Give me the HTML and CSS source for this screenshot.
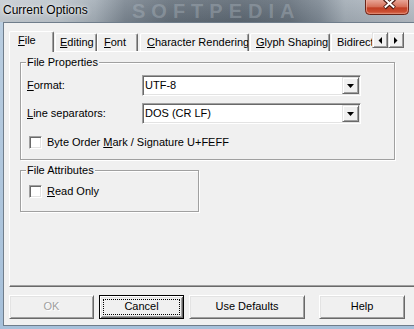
FILE: index.html
```html
<!DOCTYPE html>
<html>
<head>
<meta charset="utf-8">
<link rel="stylesheet" href="styles.css">
</head>
<body>
<div class="window">
  <div class="titlebar">
    <span class="title">Current Options</span>
    <span class="wm">SOFTPEDIA</span>
    <svg class="close" width="44" height="15" viewBox="0 0 44 15">
      <defs>
        <linearGradient id="cg" x1="0" y1="0" x2="0" y2="1">
          <stop offset="0" stop-color="#e8a596"/>
          <stop offset="0.45" stop-color="#d6715a"/>
          <stop offset="0.55" stop-color="#c13f24"/>
          <stop offset="1" stop-color="#d25a3c"/>
        </linearGradient>
      </defs>
      <path d="M0.5 0 V10.5 a4 4 0 0 0 4 4 H39.5 a4 4 0 0 0 4 -4 V0" fill="url(#cg)" stroke="#6a2518"/>
      <path d="M1.5 0 V10.3 a3 3 0 0 0 3 3 H39.5 a3 3 0 0 0 3 -3 V0" fill="none" stroke="#f0b7a8" stroke-opacity="0.6"/>
      <path d="M19.5 -1 L29.5 8 M29.5 -1 L19.5 8" stroke="#4a1a12" stroke-width="4"/>
      <path d="M19.8 -1 L29.2 7.5 M29.2 -1 L19.8 7.5" stroke="#ffffff" stroke-width="2"/>
    </svg>
  </div>
  <div class="frame">
    <div class="client">
      <div class="tabs">
        <div class="tab sel t-file"><u>F</u>ile</div>
        <div class="tab t-edit"><u>E</u>diting</div>
        <div class="tab t-font"><u>F</u>ont</div>
        <div class="tab t-char"><u>C</u>haracter Rendering</div>
        <div class="tab t-glyph"><u>G</u>lyph Shaping</div>
        <div class="tab t-bidi">Bidirectional</div>
        <div class="scroller">
          <div class="sbtn"><svg width="4" height="7" viewBox="0 0 4 7"><path d="M4 0 V7 L0.5 3.5Z" fill="#000"/></svg></div>
          <div class="sbtn"><svg width="4" height="7" viewBox="0 0 4 7"><path d="M0 0 V7 L3.5 3.5Z" fill="#000"/></svg></div>
        </div>
      </div>
      <div class="panel">
        <fieldset class="group g-props">
          <legend>File Properties</legend>
          <div class="row r1">
            <span class="lbl"><u>F</u>ormat:</span>
            <div class="combo"><span class="val">UTF-8</span><span class="drop"><svg width="7" height="4" viewBox="0 0 7 4"><path d="M0 0 H7 L3.5 4Z" fill="#000"/></svg></span></div>
          </div>
          <div class="row r2">
            <span class="lbl"><u>L</u>ine separators:</span>
            <div class="combo"><span class="val">DOS (CR LF)</span><span class="drop"><svg width="7" height="4" viewBox="0 0 7 4"><path d="M0 0 H7 L3.5 4Z" fill="#000"/></svg></span></div>
          </div>
          <div class="check c1"><span class="box"></span><span>Byte Order <u>M</u>ark / Signature U+FEFF</span></div>
        </fieldset>
        <fieldset class="group g-attr">
          <legend>File Attributes</legend>
          <div class="check c2"><span class="box"></span><span><u>R</u>ead Only</span></div>
        </fieldset>
      </div>
      <div class="buttons">
        <button class="btn b-ok" disabled>OK</button>
        <button class="btn b-cancel def">Cancel</button>
        <button class="btn b-def">Use Defaults</button>
        <button class="btn b-help">Help</button>
      </div>
    </div>
  </div>
</div>
</body>
</html>
```
FILE: styles.css
```css
html, body {
  margin: 0;
  padding: 0;
}
body {
  font-family: "Liberation Sans", Arial, sans-serif;
  font-size: 11px;
  color: #000;
  background: #aac3dc;
}
.window {
  width: 414px;
  height: 329px;
  display: flex;
  flex-direction: column;
  overflow: hidden;
}
.titlebar {
  height: 22px;
  flex: none;
  position: relative;
  display: flex;
  align-items: flex-start;
  background:
    linear-gradient(180deg, rgba(255,255,255,0.10), rgba(0,0,0,0.05)),
    linear-gradient(90deg, #c6cdd3 0, #bcc4cb 60px, #a3adb6 95px, #7a8590 125px, #646f7a 170px, #5d6873 240px, #65707b 290px, #7d8893 320px, #a2acb5 345px, #b4bcc4 414px);
  overflow: hidden;
}
.title {
  position: relative;
  z-index: 1;
  padding: 3px 0 0 3px;
  font-size: 12px;
  line-height: 14px;
  color: #000;
  text-shadow: 0 0 5px rgba(255,255,255,0.9), 0 0 2px rgba(255,255,255,0.7);
}
.wm {
  position: absolute;
  left: 132px;
  top: 0;
  font-size: 20px;
  font-weight: bold;
  letter-spacing: 6px;
  color: rgba(190, 199, 207, 0.32);
  line-height: 22px;
  white-space: nowrap;
}
.close {
  margin-left: auto;
  margin-right: 5px;
  display: block;
  position: relative;
  z-index: 1;
}
.frame {
  flex: 1;
  padding: 0 3px 3px 3px;
  background: linear-gradient(180deg, #b9cde0, #a6c0da);
  display: flex;
}
.client {
  flex: 1;
  border: 1px solid #6f7d8b;
  background: #f0f0f0;
  padding: 8px 4px 0 5px;
  display: flex;
  flex-direction: column;
}

/* tabs */
.tabs {
  position: relative;
  z-index: 1;
  height: 21px;
  display: flex;
  align-items: flex-start;
  overflow: hidden;
  flex: none;
}
.tab {
  flex: none;
  box-sizing: border-box;
  height: 18px;
  margin-top: 2px;
  border-top: 1px solid #fff;
  border-left: 1px solid #fff;
  border-right: 1px solid #696969;
  border-radius: 2px 2px 0 0;
  box-shadow: inset -1px 0 0 #a0a0a0;
  padding: 2px 0 0 5px;
  line-height: 13px;
  white-space: nowrap;
  overflow: hidden;
  background: #f0f0f0;
}
.tab.sel {
  height: 21px;
  margin-top: 0;
}
.t-file { width: 45px; padding-left: 8px; }
.t-edit { width: 42px; margin-left: 1px; padding-left: 4px; }
.t-font { width: 41px; padding-left: 6px; }
.t-char { width: 109px; margin-left: 2px; padding-left: 6px; }
.t-glyph { width: 80px; margin-left: 1px; padding-left: 5px; }
.t-bidi { width: 90px; margin-left: 1px; padding-left: 5px; }
.scroller {
  position: absolute;
  top: 1px;
  left: 363px;
  width: 32px;
  height: 16px;
  display: flex;
  background: #f0f0f0;
  z-index: 2;
}
.sbtn {
  flex: none;
  width: 16px;
  height: 16px;
  box-sizing: border-box;
  border: 1px solid;
  border-color: #e3e3e3 #696969 #696969 #e3e3e3;
  box-shadow: inset 1px 1px 0 #fff, inset -1px -1px 0 #a0a0a0;
  background: #f0f0f0;
  display: flex;
  align-items: center;
  justify-content: center;
}
.sbtn svg { display: block; }

/* panel */
.panel {
  flex: none;
  margin-top: -1px;
  height: 236px;
  box-sizing: border-box;
  border: 1px solid;
  border-color: #fff #696969 #696969 #fff;
  box-shadow: inset -1px -1px 0 #a0a0a0;
  padding: 4px 0 0 10px;
}
.group {
  margin: 0;
  padding: 0;
  border: 1px solid #a0a0a0;
  box-shadow: inset 1px 1px 0 #fff, 1px 1px 0 #fff;
  min-width: 0;
  box-sizing: border-box;
}
.group legend {
  margin-left: 5px;
  padding: 0 1px;
  line-height: 13px;
  background: #f0f0f0;
}
.g-props {
  width: 375px;
  padding-bottom: 10px;
}
.g-attr {
  width: 179px;
  margin-top: 4px;
  padding-bottom: 13px;
}
.row {
  display: flex;
  align-items: center;
  height: 21px;
}
.r1 { margin-top: 6px; }
.r2 { margin-top: 7px; }
.lbl {
  width: 115px;
  margin-left: 6px;
  line-height: 13px;
}
.combo {
  width: 219px;
  height: 21px;
  box-sizing: border-box;
  border: 1px solid;
  border-color: #a0a0a0 #fff #fff #a0a0a0;
  box-shadow: inset 1px 1px 0 #696969, inset -1px -1px 0 #e3e3e3;
  background: #fff;
  padding: 1px;
  display: flex;
  align-items: center;
}
.combo .val {
  flex: 1;
  padding-left: 1px;
  line-height: 13px;
}
.drop {
  width: 17px;
  height: 17px;
  box-sizing: border-box;
  border: 1px solid;
  border-color: #e3e3e3 #696969 #696969 #e3e3e3;
  box-shadow: inset 1px 1px 0 #fff, inset -1px -1px 0 #a0a0a0;
  background: #f0f0f0;
  display: flex;
  align-items: center;
  justify-content: center;
}
.drop svg { display: block; }
.check {
  display: flex;
  align-items: center;
  margin-left: 8px;
  height: 13px;
  line-height: 13px;
}
.c1 { margin-top: 12px; }
.c2 { margin-top: 8px; }
.box {
  width: 13px;
  height: 13px;
  box-sizing: border-box;
  border: 1px solid;
  border-color: #a0a0a0 #fff #fff #a0a0a0;
  box-shadow: inset 1px 1px 0 #696969, inset -1px -1px 0 #e3e3e3;
  background: #fff;
  margin-right: 5px;
  flex: none;
}

/* buttons */
.buttons {
  display: flex;
  margin-top: 8px;
  flex: none;
}
.btn {
  appearance: none;
  -webkit-appearance: none;
  font-family: inherit;
  font-size: 11px;
  color: #000;
  height: 24px;
  box-sizing: border-box;
  margin: 0;
  padding: 0 0 2px 0;
  border: 1px solid;
  border-color: #fff #696969 #696969 #fff;
  box-shadow: inset 1px 1px 0 #e3e3e3, inset -1px -1px 0 #a0a0a0;
  background: #f0f0f0;
  position: relative;
  line-height: 13px;
}
.b-ok {
  width: 85px;
  color: #a0a0a0;
  text-shadow: 1px 1px 0 #fff;
}
.b-cancel { width: 85px; margin-left: 5px; }
.b-def { width: 116px; margin-left: 5px; }
.b-help { width: 86px; margin-left: 14px; }
.btn.def {
  border-color: #000;
  box-shadow: inset 1px 1px 0 #fff, inset -1px -1px 0 #696969, inset 2px 2px 0 #e3e3e3, inset -2px -2px 0 #a0a0a0;
}
.btn.def::after {
  content: "";
  position: absolute;
  left: 3px;
  top: 3px;
  right: 3px;
  bottom: 3px;
  border: 1px dotted #000;
}
```
